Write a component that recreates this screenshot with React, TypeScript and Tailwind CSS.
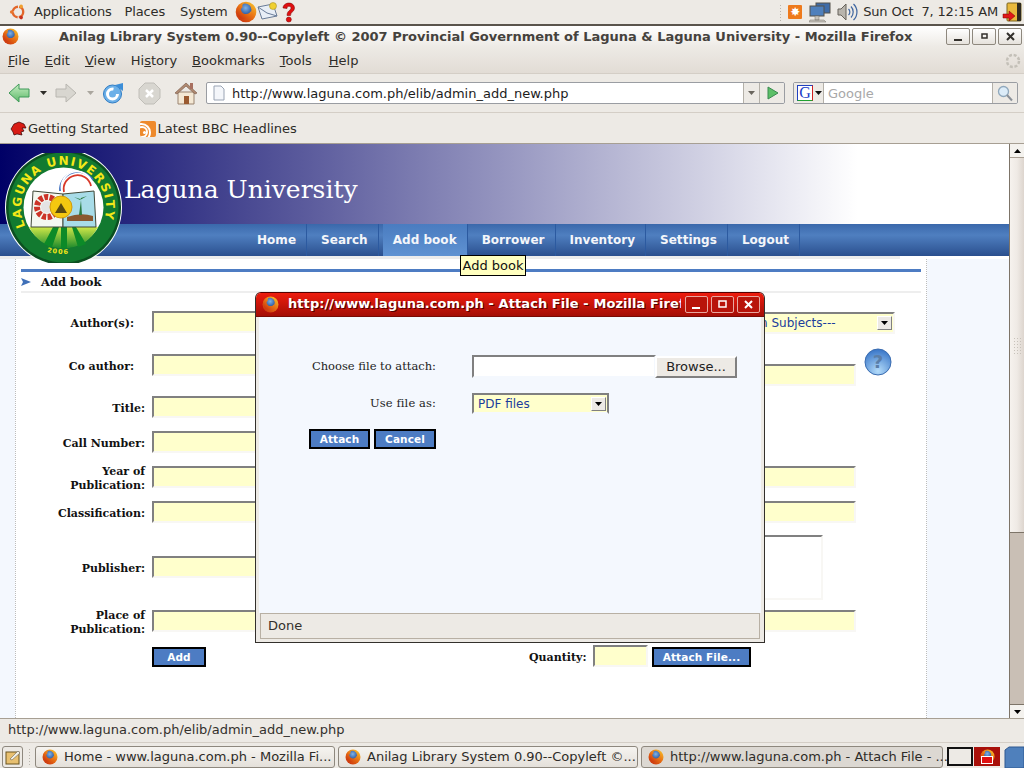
import React from 'react';

function Firefox({ size = 18 }: { size?: number }) {
  return (
    <svg width={size} height={size} viewBox="0 0 32 32" className="shrink-0">
      <defs>
        <radialGradient id="ffglobe" cx="0.55" cy="0.35" r="0.6">
          <stop offset="0" stopColor="#7fb2e5" />
          <stop offset="1" stopColor="#1d4a96" />
        </radialGradient>
        <linearGradient id="fffox" x1="1" y1="0" x2="0.2" y2="1">
          <stop offset="0" stopColor="#f9d030" />
          <stop offset="0.5" stopColor="#ea7414" />
          <stop offset="1" stopColor="#c8300f" />
        </linearGradient>
      </defs>
      <circle cx="16" cy="16" r="15" fill="url(#fffox)" />
      <circle cx="14.500" cy="13" r="9.500" fill="url(#ffglobe)" />
      <path d="M2 13c1-5 5-9 11-10-2 2-3 4-2 6-2 1-3 3-2 5 1 3 4 5 7 5 4 0 7-3 8-6 .5 7-5 13-12 13C7 26 2 20 2 13z" fill="url(#fffox)" />
    </svg>
  );
}

function UbuntuLogo() {
  return (
    <svg width="18" height="20" viewBox="0 0 20 20">
      <circle cx="10" cy="10" r="5.800" fill="none" stroke="#e2662a" strokeWidth="2.600" strokeDasharray="8 1.300" />
      <circle cx="3" cy="10" r="2" fill="#e8762c" />
      <circle cx="13.500" cy="3.800" r="2" fill="#f0a030" />
      <circle cx="13.500" cy="16.200" r="2" fill="#c8301c" />
    </svg>
  );
}

function WinButton({ kind, red }: { kind: 'min' | 'max' | 'close'; red?: boolean }) {
  const c = red ? '#ffffff' : '#33302c';
  return (
    <div
      className={
        red
          ? 'flex items-center justify-center w-[23px] h-[17px] rounded-[2px] border border-[#e8a8a0] bg-[#b8140a]'
          : 'flex items-center justify-center w-[24px] h-[17px] rounded-[2px] border border-[#8e887e] bg-gradient-to-b from-[#ffffff] to-[#e6e2dc]'
      }
    >
      <svg width="11" height="11" viewBox="0 0 11 11">
        {kind === 'min' && <rect x="1" y="8" width="8" height="2" fill={c} />}
        {kind === 'max' && <rect x={red ? 2 : 3} y={red ? 2 : 3} width={red ? 7 : 5} height={red ? 6 : 4} fill="none" stroke={c} strokeWidth="1.500" />}
        {kind === 'close' && <path d="M2 2l7 7M9 2l-7 7" stroke={c} strokeWidth="2" />}
      </svg>
    </div>
  );
}

function TopPanel() {
  return (
    <div className="flex items-center h-[24px] bg-[#edeae5] text-[13px] tracking-[-0.15px] text-[#2e2c28]">
      <div className="ml-[9px] w-[25px]">
        <UbuntuLogo />
      </div>
      <span>Applications</span>
      <span className="ml-[13px]">Places</span>
      <span className="ml-[15px]">System</span>
      <div className="ml-[7px]">
        <Firefox size={22} />
      </div>
      <svg width="21" height="20" viewBox="0 0 21 20">
        <path d="M1 5l15-3 4 12-15 3z" fill="#e8eef6" stroke="#6a7c98" />
        <path d="M1 5l9 6 10 3" fill="none" stroke="#6a7c98" />
        <circle cx="16" cy="4" r="3.500" fill="#f0d030" stroke="#9a8420" strokeWidth="0.500" />
      </svg>
      <svg className="ml-[3px]" width="15" height="21" viewBox="0 0 15 21">
        <path d="M2 6c0-3 3-5 6-5s5.500 2 5.500 5c0 3.500-4 4-4 7.500H6c0-5 4-5 4-7.500 0-1-.8-1.800-2-1.800S6 5 6 6.500z" fill="#e01010" stroke="#700" strokeWidth="0.500" />
        <circle cx="7.800" cy="17.500" r="2.500" fill="#e01010" stroke="#700" strokeWidth="0.500" />
      </svg>
      <div className="ml-auto flex items-center">
        <div className="w-[4px] h-[17px] bg-[radial-gradient(#b8b4ac_1px,transparent_1px)] bg-[length:3px_3px]" />
        <div className="ml-[5px] w-[14px] h-[14px] rounded-[1px] bg-[#ee7a1c] flex items-center justify-center text-white text-[12px] leading-none font-bold">
          ✸
        </div>
        <svg className="ml-[7px]" width="22" height="21" viewBox="0 0 22 21">
          <rect x="7" y="1" width="14" height="10" fill="#3f6ca8" stroke="#55504a" />
          <rect x="1" y="4" width="14" height="10" fill="#4f80bc" stroke="#55504a" />
          <path d="M1 18h14l2 2H0zM6 14h4v4H6z" fill="#c8c4bc" stroke="#77726a" strokeWidth="0.500" />
        </svg>
        <svg className="ml-[6px]" width="21" height="20" viewBox="0 0 21 20">
          <path d="M1 7h3l5-5v16l-5-5H1z" fill="#b8b4ac" stroke="#66625a" />
          <path d="M11.500 7a4 4 0 010 6M14 4.500a8 8 0 010 11M16.500 2a11 11 0 010 16" fill="none" stroke="#3f66a0" strokeWidth="1.200" />
        </svg>
        <span className="ml-[5px] whitespace-pre">Sun Oct  7, 12:15 AM</span>
        <svg className="ml-[4px] mr-[2px]" width="20" height="21" viewBox="0 0 20 21">
          <rect x="5" y="1" width="14" height="18" rx="1" fill="#e8b83c" stroke="#7a6420" />
          <rect x="15" y="1" width="4" height="18" fill="#2e2a20" />
          <path d="M1 12h6V9l6 5-6 5v-3H1z" fill="#e01818" stroke="#700" strokeWidth="0.500" />
        </svg>
      </div>
    </div>
  );
}

function MenuItem({ pre, u, post, className }: { pre?: string; u: string; post: string; className?: string }) {
  return (
    <span className={className}>
      {pre}
      <span className="underline">{u}</span>
      {post}
    </span>
  );
}

function NavArrow({ back, off }: { back?: boolean; off?: boolean }) {
  return (
    <svg width="22" height="22" viewBox="0 0 22 22" className={back ? '' : 'rotate-180'}>
      <defs>
        <linearGradient id="arrowgreen" x1="0" y1="0" x2="0" y2="1">
          <stop offset="0" stopColor="#c8efc4" />
          <stop offset="1" stopColor="#5cb868" />
        </linearGradient>
      </defs>
      <path
        d="M1 11L11 2v5h10v8H11v5z"
        fill={off ? '#d8d6d0' : 'url(#arrowgreen)'}
        stroke={off ? '#b8b6b0' : '#3f9a58'}
        strokeWidth="1"
      />
    </svg>
  );
}

function Caret({ color = '#2e2c28' }: { color?: string }) {
  return (
    <svg width="7" height="4" viewBox="0 0 7 4" className="shrink-0">
      <path d="M0 0h7L3.500 4z" fill={color} />
    </svg>
  );
}

function Toolbar() {
  return (
    <div className="flex items-center h-[40px] pl-[8px] border-y border-[#d4cec6] bg-[#edeae5]">
      <NavArrow back />
      <div className="ml-[10px]">
        <Caret />
      </div>
      <div className="ml-[8px]">
        <NavArrow off />
      </div>
      <div className="ml-[10px]">
        <Caret color="#aaa69e" />
      </div>
      <svg className="ml-[7px]" width="23" height="23" viewBox="0 0 23 23">
        <circle cx="11.500" cy="12" r="9" fill="#6cb0e8" stroke="#2f7cc4" strokeWidth="1" />
        <circle cx="11.500" cy="12" r="5" fill="none" stroke="#ffffff" strokeWidth="3" strokeDasharray="24 8" />
        <path d="M14 3l8-2v8z" fill="#3c8ed8" />
      </svg>
      <svg className="ml-[14px]" width="23" height="23" viewBox="0 0 23 23">
        <path d="M7 1h9l6 6v9l-6 6H7l-6-6V7z" fill="#d8d6d0" stroke="#c0beb8" />
        <path d="M8 8l7 7M15 8l-7 7" stroke="#ffffff" strokeWidth="2.500" />
      </svg>
      <svg className="ml-[13px]" width="24" height="24" viewBox="0 0 24 24">
        <path d="M4 11v12h16V11z" fill="#f4e8d4" stroke="#9a8470" />
        <path d="M1 12L12 2l11 10-2 1-9-8-9 8z" fill="#b08a70" stroke="#806050" strokeWidth="0.700" />
        <rect x="16" y="2" width="3" height="6" fill="#a87060" />
        <rect x="10" y="15" width="5" height="8" fill="#9a5a30" />
      </svg>
      <div className="ml-[8px] flex items-center w-[579px] h-[22px] rounded-[2px] border border-[#9a9da2] bg-white">
        <svg className="ml-[5px]" width="14" height="16" viewBox="0 0 14 16">
          <path d="M2 1h7l3 3v11H2z" fill="#f4f6fa" stroke="#9aa4b4" />
        </svg>
        <span className="ml-[6px] pt-[1px] text-[13px] text-[#1c1c1c]">http://www.laguna.com.ph/elib/admin_add_new.php</span>
        <div className="ml-auto flex items-center justify-center w-[17px] h-full border-x border-[#b4b0a8] bg-[#edeae5]">
          <Caret color="#6a665e" />
        </div>
        <div className="flex items-center justify-center w-[24px] h-full bg-[#edeae5] rounded-r-[2px]">
          <svg width="13" height="14" viewBox="0 0 13 14">
            <path d="M2 1l10 6-10 6z" fill="#5cc068" stroke="#3a8a50" />
          </svg>
        </div>
      </div>
      <div className="ml-[8px] flex items-center w-[225px] h-[22px] rounded-[2px] border border-[#9a9da2] bg-white">
        <div className="flex items-center w-[30px] h-full bg-[#edeae5] border-r border-[#b4b0a8] pl-[3px] gap-[2px]">
          <div className="flex items-center justify-center w-[16px] h-[16px] bg-white border border-t-[#2040c0] border-l-[#2040c0] border-r-[#d02020] border-b-[#20a030] font-['Liberation_Serif',serif] text-[16px] leading-none text-[#1a3cc8]">
            G
          </div>
          <Caret color="#111111" />
        </div>
        <span className="ml-[4px] pt-[1px] text-[13px] text-[#a8a8a8]">Google</span>
        <div className="ml-auto flex items-center justify-center w-[25px] h-full border-l border-[#b4b0a8] bg-[#edeae5] rounded-r-[2px]">
          <svg width="16" height="17" viewBox="0 0 16 17">
            <circle cx="6.500" cy="6.500" r="5" fill="#dcecf8" stroke="#90a8bc" strokeWidth="1.300" />
            <path d="M10 10l5 5.500" stroke="#8a9098" strokeWidth="2" />
          </svg>
        </div>
      </div>
    </div>
  );
}

const navItems = ['Home', 'Search', 'Add book', 'Borrower', 'Inventory', 'Settings', 'Logout'];

function LagunaSeal() {
  return (
    <svg width="118" height="110" viewBox="0 0 118 110" className="absolute left-[5px] top-[153px]">
      <defs>
        <path id="sealArc" d="M21.300 75A42.500 42.500 0 1 1 95.700 75" />
        <path id="sealYear" d="M42 99Q59 103 78 99" />
        <linearGradient id="sealGrass" x1="0" y1="0" x2="0" y2="1">
          <stop offset="0" stopColor="#d0e848" />
          <stop offset="1" stopColor="#1c8a2c" />
        </linearGradient>
      </defs>
      <circle cx="58.500" cy="54.500" r="58.500" fill="#ffffff" />
      <circle cx="58.500" cy="54.500" r="57.500" fill="#0b4f20" />
      <circle cx="58.500" cy="54.500" r="55" fill="#127a30" />
      <text fontFamily="'DejaVu Sans',sans-serif" fontWeight="700" fontSize="12" fill="#f4e818" letterSpacing="1.400">
        <textPath href="#sealArc" startOffset="2">LAGUNA UNIVERSITY</textPath>
      </text>
      <circle cx="58.500" cy="54.500" r="40" fill="#ffffff" />
      <path d="M24 74h69a40 40 0 0 1-13 15 40 40 0 0 1-43 0 40 40 0 0 1-13-15z" fill="url(#sealGrass)" />
      <path d="M48 74l-9 17 8 3 7-20zM56 74v21h6V74zM67 74l6 20 8-3-10-17z" fill="#0c8a28" />
      <path d="M28 38l30 3v33H26z" fill="#f4f8f0" stroke="#404838" />
      <path d="M89 38l-31 3v33h33z" fill="#a8dce8" stroke="#404838" />
      <path d="M62 64q14-5 26-1v5H62z" fill="#8a5830" />
      <path d="M76 47l-2 15h3l-1-15zM75 47l7-4-6 2zM75 47l-6-3 6 2z" fill="#2a7a40" />
      <circle cx="42" cy="54" r="10" fill="none" stroke="#cc3428" strokeWidth="6" strokeDasharray="4 1.500" />
      <circle cx="42" cy="54" r="6" fill="#e4e4e4" />
      <path d="M55 38a18 18 0 0 1 33-11" fill="none" stroke="#4070c0" strokeWidth="1.800" />
      <path d="M57 38a15.500 15.500 0 0 1 30-8" fill="none" stroke="#ffffff" strokeWidth="1.800" />
      <path d="M59 39a13 13 0 0 1 27-6" fill="none" stroke="#d83828" strokeWidth="1.800" />
      <circle cx="56" cy="54" r="11" fill="#f4c810" stroke="#d09a10" />
      <path d="M50 60l6-10 6 10z" fill="#5a4a10" />
      <text fontFamily="'DejaVu Sans',sans-serif" fontWeight="700" fontSize="6.500" fill="#f4e818" letterSpacing="1">
        <textPath href="#sealYear">2006</textPath>
      </text>
    </svg>
  );
}

const fieldClass = 'h-[22px] bg-[#ffffcc] border-2 border-t-[#808080] border-l-[#808080] border-r-[#f8f7f4] border-b-[#f8f7f4]';
const blueBtn = 'flex items-center justify-center h-[20px] pt-[1px] bg-[#4d7cc3] border-2 border-black text-[10.500px] font-bold text-white tracking-[0.1px]';
const selectBox = 'flex items-center justify-center w-[15px] h-[14px] border border-[#ffffff] border-r-[#808080] border-b-[#808080] bg-[#edeae5]';

const leftRows = [
  { lines: ['Author(s):'], cls: 'mt-[18px]', pad: 'pr-[11px]' },
  { lines: ['Co author:'], cls: 'mt-[21px]', pad: 'pr-[11px]' },
  { lines: ['Title:'], cls: 'mt-[20px]', pad: '' },
  { lines: ['Call Number:'], cls: 'mt-[13px]', pad: '' },
  { lines: ['Year of', 'Publication:'], cls: 'mt-[13px]', pad: '' },
  { lines: ['Classification:'], cls: 'mt-[13px]', pad: '' },
  { lines: ['Publisher:'], cls: 'mt-[33px]', pad: '' },
  { lines: ['Place of', 'Publication:'], cls: 'mt-[32px]', pad: '' },
];

function BookForm() {
  return (
    <div className="flex font-['DejaVu_Serif',serif] text-[11px] font-bold text-[#111111]">
      <div className="flex flex-col w-[469px]">
        {leftRows.map((row) => (
          <div key={row.lines[0]} className={`flex items-center h-[22px] ${row.cls}`}>
            <div className={`w-[124px] pt-[4px] text-right leading-[14px] ${row.pad}`}>
              {row.lines.map((l) => (
                <div key={l}>{l}</div>
              ))}
            </div>
            <div className={`ml-[7px] flex-1 ${fieldClass}`} />
          </div>
        ))}
        <button className={`ml-[131px] mt-[15px] w-[54px] ${blueBtn} font-['DejaVu_Sans',sans-serif]`}>Add</button>
      </div>
      <div className="flex flex-col w-[395px] ml-[10px]">
        <div className="mt-[19px] flex items-center justify-end pr-[1px] w-[395px] h-[22px] bg-[#ffffcc] border-2 border-t-[#808080] border-l-[#808080] border-r-[#f8f7f4] border-b-[#f8f7f4] font-['DejaVu_Sans',sans-serif] font-normal text-[12px] text-[#1c3d9c]">
          <span className="mr-auto ml-[224px]">---Main Subjects---</span>
          <div className={selectBox}>
            <Caret color="#000000" />
          </div>
        </div>
        <div className="mt-[30px] flex">
          <div className={`w-[356px] ${fieldClass}`} />
          <svg className="ml-[8px] -mt-[16px] shrink-0" width="28" height="28" viewBox="0 0 28 28">
            <defs>
              <radialGradient id="helpBall" cx="0.5" cy="0.85" r="0.9">
                <stop offset="0" stopColor="#b4dcfa" />
                <stop offset="1" stopColor="#2f6ec4" />
              </radialGradient>
            </defs>
            <circle cx="14" cy="14" r="13" fill="url(#helpBall)" stroke="#3a6cb0" />
            <text x="14" y="20" textAnchor="middle" fontFamily="'DejaVu Sans',sans-serif" fontWeight="700" fontSize="18" fill="#5a7ea8">?</text>
          </svg>
        </div>
        <div className={`mt-[80px] w-[356px] ${fieldClass}`} />
        <div className={`mt-[13px] w-[356px] ${fieldClass}`} />
        <div className="mt-[12px] w-[323px] h-[65px] bg-white border-2 border-t-[#808080] border-l-[#808080] border-r-[#f8f7f4] border-b-[#f8f7f4]" />
        <div className={`mt-[10px] w-[356px] ${fieldClass}`} />
        <div className="mt-[13px] flex items-end">
          <span className="ml-[29px] w-[57px] pb-[1px]">Quantity:</span>
          <div className={`ml-[7px] w-[55px] ${fieldClass}`} />
          <button className={`ml-[4px] w-[99px] ${blueBtn} font-['DejaVu_Sans',sans-serif]`}>Attach File...</button>
        </div>
      </div>
    </div>
  );
}

function Scrollbar() {
  return (
    <div className="flex flex-col w-[15px] border-l border-[#7d7468] bg-[#c9bfb5]">
      <div className="flex items-center justify-center h-[14px] bg-[#f4f2ee] border-b border-[#a89e92]">
        <svg width="7" height="4" viewBox="0 0 7 4">
          <path d="M0 4h7L3.500 0z" fill="#000000" />
        </svg>
      </div>
      <div className="flex flex-col items-center justify-center h-[375px] border-b border-[#7d7468] bg-gradient-to-r from-[#f6f2ee] via-[#efeae5] to-[#ddd5ce]">
        <div className="w-[9px] h-[17px] bg-[radial-gradient(#c8c2ba_1px,transparent_1px)] bg-[length:3px_3px]" />
      </div>
      <div className="flex-1" />
      <div className="flex items-center justify-center h-[14px] bg-[#f4f2ee] border-t border-[#7d7468]">
        <Caret color="#000000" />
      </div>
    </div>
  );
}

function Page() {
  return (
    <div className="flex h-[576px] bg-white border-y border-[#a79f93]">
      <div className="flex flex-col w-[1009px]">
        <div className="h-[80px] flex items-center pl-[124px] pt-[11px] bg-linear-to-r/srgb from-[#000066] to-[#ffffff] to-85% font-['DejaVu_Serif',serif] text-[25px] text-white">
          Laguna University
        </div>
        <div className="flex h-[32px] pl-[243px] bg-linear-to-b/srgb from-[#3a68ab] via-[#4f7fc0] via-35% to-[#2a4f8e] text-[12px] font-bold tracking-[0.03px] text-[#f4f6fa]">
          {navItems.map((item) => (
            <div key={item} className={item === 'Add book' ? 'flex items-center ml-[4px] px-[10px] border-r border-[#2c5aa0] bg-linear-to-b/srgb from-[#4a7cc0] to-[#5f92d2]' : 'flex items-center ml-[4px] px-[10px] border-r border-[#2c5aa0]'}>
              {item}
            </div>
          ))}
        </div>
        <div className="w-[900px] h-[3px] bg-[#ececec]" />
        <div className="flex flex-1 bg-[#f4f8fe]">
          <div className="w-[15px] shrink-0" />
          <div className="w-[912px] shrink-0 bg-white border-x border-dotted border-[#bcbcbc] pl-[5px] pr-[5px] pt-[10px]">
            <div className="h-[3px] bg-[#4d7cc3]" />
            <div className="flex items-center h-[21px] pt-[2px] border-b-2 border-[#eeeeee] font-['DejaVu_Serif',serif] text-[11.500px] font-bold text-[#111111]">
              <svg className="-mt-[2px]" width="10" height="8" viewBox="0 0 10 8">
                <path d="M0 0l10 4-10 4 2-4z" fill="#3f70b8" />
              </svg>
              <span className="ml-[10px]">Add book</span>
            </div>
            <BookForm />
          </div>
        </div>
      </div>
      <Scrollbar />
    </div>
  );
}

function AttachDialog() {
  return (
    <div className="absolute left-[255px] top-[292px] w-[510px] h-[351px] flex flex-col rounded-t-[6px] border border-[#33302c] border-t-[#500] bg-[#edeae5] overflow-hidden">
      <div className="flex items-center shrink-0 h-[24px] pl-[6px] pr-[4px] bg-linear-to-b/srgb from-[#ee1c0e] to-[#a40e06] border-b border-[#7a0a04]">
        <Firefox size={17} />
        <div className="ml-[9px] pb-[1px] w-[393px] overflow-hidden whitespace-nowrap text-[13px] font-bold tracking-[0.07px] text-white [text-shadow:1px_1px_0_#500]">
          http://www.laguna.com.ph - Attach File - Mozilla Firefox
        </div>
        <div className="ml-auto flex gap-[3px]">
          <WinButton kind="min" red />
          <WinButton kind="max" red />
          <WinButton kind="close" red />
        </div>
      </div>
      <div className="flex-1 mx-[3px] bg-[#f4f8fe] font-['DejaVu_Serif',serif] text-[11.500px] text-[#222222] flex flex-col">
        <div className="mt-[38px] flex items-center">
          <span className="w-[177px] text-right">Choose file to attach:</span>
          <div className="ml-[36px] w-[184px] h-[23px] bg-white border-2 border-t-[#808080] border-l-[#808080] border-r-[#f4f8fe] border-b-[#f4f8fe]" />
          <div className="ml-[-1px] w-[82px] h-[22px] flex items-center justify-center bg-[#edeae5] border-2 border-t-[#ffffff] border-l-[#ffffff] border-r-[#808080] border-b-[#808080] font-['DejaVu_Sans',sans-serif] text-[13px] text-[#222222]">
            Browse...
          </div>
        </div>
        <div className="mt-[15px] flex items-center">
          <span className="w-[177px] text-right tracking-[0.1px]">Use file as:</span>
          <div className="ml-[36px] w-[137px] h-[21px] flex items-center pr-[1px] bg-[#ffffcc] border-2 border-t-[#808080] border-l-[#808080] border-r-[#808080] border-b-[#f4f8fe] font-['DejaVu_Sans',sans-serif] text-[12px] text-[#1c3d9c]">
            <span className="ml-[4px]">PDF files</span>
            <div className={`ml-auto ${selectBox}`}>
              <Caret color="#000000" />
            </div>
          </div>
        </div>
        <div className="mt-[15px] ml-[50px] flex gap-[4px] font-['DejaVu_Sans',sans-serif]">
          <button className={`w-[61px] ${blueBtn}`}>Attach</button>
          <button className={`w-[62px] ${blueBtn}`}>Cancel</button>
        </div>
      </div>
      <div className="flex items-center shrink-0 h-[26px] mx-[4px] mb-[3px] pl-[7px] border border-[#b8b0a4] text-[13px] text-[#33302c]">
        Done
      </div>
    </div>
  );
}

function TaskButton({ title, pressed }: { title: string; pressed?: boolean }) {
  return (
    <div className={pressed ? 'flex items-center w-[302px] h-[22px] pl-[6px] rounded-[3px] border border-[#8e887e] bg-[#dcd8d2]' : 'flex items-center w-[300px] h-[22px] pl-[6px] rounded-[3px] border border-[#8e887e] bg-gradient-to-b from-[#f6f4f0] to-[#e4e0da]'}>
      <Firefox size={16} />
      <span className="ml-[6px] whitespace-nowrap text-[13px] text-[#2e2c28]">{title}</span>
    </div>
  );
}

function Taskbar() {
  return (
    <div className="flex items-center h-[25px] pt-[2px] pl-[2px] bg-[#edeae5]">
      <div className="flex items-center justify-center w-[21px] h-[22px] rounded-[3px] border border-[#8e887e]">
        <svg width="16" height="16" viewBox="0 0 16 16">
          <rect x="1" y="3" width="13" height="12" fill="#e8c070" stroke="#6a5420" />
          <path d="M5 10l8-8 2 2-8 7z" fill="#f0f0e8" stroke="#55504a" strokeWidth="0.500" />
        </svg>
      </div>
      <div className="ml-[5px] w-[4px] h-[17px] bg-[radial-gradient(#b8b4ac_1px,transparent_1px)] bg-[length:3px_3px]" />
      <div className="ml-[3px] flex gap-[3px]">
        <TaskButton title="Home - www.laguna.com.ph - Mozilla Fi..." />
        <TaskButton title="Anilag Library System 0.90--Copyleft ©..." />
        <TaskButton pressed title="http://www.laguna.com.ph - Attach File - ..." />
      </div>
      <div className="ml-[4px] flex h-[19px] gap-[1px]">
        <div className="w-[26px] border-2 border-[#111111] bg-[#edeae5]" />
        <div className="relative flex items-center justify-center w-[26px] bg-[#a8100a]">
          <Firefox size={15} />
          <div className="absolute left-[7px] bottom-[2px] w-[12px] h-[8px] border border-white bg-[#e01010]" />
        </div>
      </div>
      <svg className="ml-[4px]" width="20" height="22" viewBox="0 0 20 22">
        <path d="M1 4l4-3h15v21H1z" fill="#4f80bc" stroke="#2f5890" />
      </svg>
    </div>
  );
}

export default function App() {
  return (
    <div className="relative flex flex-col w-[1024px] h-[768px] overflow-hidden bg-[#edeae5] font-['DejaVu_Sans',sans-serif]">
      <TopPanel />
      <div className="h-[2px] bg-[#5a544c]" />
      {/* Title bar */}
      <div className="flex items-center h-[21px] pl-[2px] pr-[2px] bg-gradient-to-b from-[#ffffff] to-[#edeae5]">
        <Firefox size={17} />
        <span className="ml-[40px] text-[13px] font-bold text-[#45423d] whitespace-nowrap">
          Anilag Library System 0.90--Copyleft © 2007 Provincial Government of Laguna &amp; Laguna University - Mozilla Firefox
        </span>
        <div className="ml-auto flex gap-[2px]">
          <WinButton kind="min" />
          <WinButton kind="max" />
          <WinButton kind="close" />
        </div>
      </div>
      {/* Menu bar */}
      <div className="flex items-center h-[26px] pt-[1px] pl-[8px] pr-[3px] gap-[15px] bg-gradient-to-b from-[#edeae5] to-[#e2dcd5] text-[13px] text-[#2e2c28]">
        <MenuItem u="F" post="ile" />
        <MenuItem u="E" post="dit" />
        <MenuItem u="V" post="iew" />
        <MenuItem pre="Hi" u="s" post="tory" />
        <MenuItem u="B" post="ookmarks" />
        <MenuItem u="T" post="ools" />
        <MenuItem u="H" post="elp" className="ml-[2px]" />
        <svg className="ml-auto" width="16" height="16" viewBox="0 0 16 16">
          <circle cx="8" cy="8" r="6" fill="none" stroke="#c4c0b8" strokeWidth="2.500" strokeDasharray="3 1.700" />
        </svg>
      </div>
      <Toolbar />
      {/* Bookmarks */}
      <div className="flex items-center h-[30px] pt-[1px] pl-[10px] text-[13px] text-[#2e2c28]">
        <svg width="17" height="16" viewBox="0 0 17 16">
          <path d="M1 8l3-5 5-2 5 2 2 4-4 0 2 3-3 1 1 3-5-1-3 1-1-3z" fill="#d81c14" stroke="#300" strokeWidth="0.700" />
        </svg>
        <span className="ml-[1px]">Getting Started</span>
        <div className="ml-[11px] relative w-[16px] h-[16px] rounded-[2px] bg-[#ee8a2c] overflow-hidden">
          <div className="absolute left-[3px] bottom-[3px] w-[3px] h-[3px] rounded-full bg-white" />
          <div className="absolute -left-[4px] top-[5px] w-[12px] h-[12px] rounded-full border-2 border-white" />
          <div className="absolute -left-[8px] top-[2px] w-[19px] h-[19px] rounded-full border-2 border-white" />
        </div>
        <span className="ml-[2px]">Latest BBC Headlines</span>
      </div>
      <Page />
      {/* Status bar */}
      <div className="flex items-center h-[24px] pb-[1px] pl-[8px] text-[13px] text-[#33302c] border-b border-[#d4cec6]">
        http://www.laguna.com.ph/elib/admin_add_new.php
      </div>
      <Taskbar />
      <LagunaSeal />
      <div className="absolute left-[460px] top-[255px] w-[66px] h-[21px] flex items-center justify-center bg-[#ffffbf] border border-black text-[13px] text-[#111111]">
        Add book
      </div>
      <AttachDialog />
    </div>
  );
}
